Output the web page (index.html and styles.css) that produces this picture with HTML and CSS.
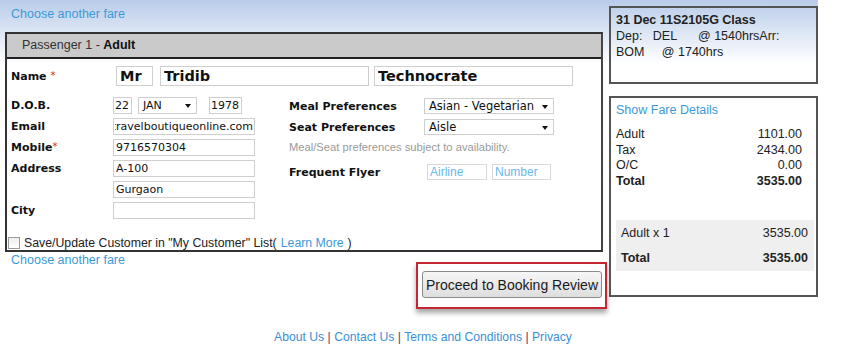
FILE: index.html
```html
<!DOCTYPE html>
<html lang="en">
<head>
  <meta charset="UTF-8">
  <title>Passenger Details</title>
  <link rel="stylesheet" href="styles.css">
</head>
<body>
  <div class="page">
    <div class="main">
      <div class="top-link"><a href="#">Choose another fare</a></div>

      <div class="pax">
        <div class="pax-head">Passenger 1 - <b>Adult</b></div>
        <div class="pax-body">
          <div class="name-row">
            <span class="lbl name-lbl">Name <span class="req">*</span></span>
            <input class="fld big title" value="Mr">
            <input class="fld big first" value="Tridib">
            <input class="fld big last" value="Technocrate">
          </div>

          <div class="cols">
            <div class="col-left">
              <span class="lbl">D.O.B.</span>
              <div class="dob">
                <input class="fld day" value="22">
                <span class="sel month">JAN</span>
                <input class="fld year" value="1978">
              </div>
              <span class="lbl">Email</span>
              <input class="fld email" value="info@travelboutiqueonline.com">
              <span class="lbl">Mobile<span class="req">*</span></span>
              <input class="fld" value="9716570304">
              <span class="lbl">Address</span>
              <input class="fld" value="A-100">
              <span class="lbl"></span>
              <input class="fld" value="Gurgaon">
              <span class="lbl">City</span>
              <input class="fld" value="">
            </div>

            <div class="col-right">
              <div class="pref meal">
                <span class="lbl">Meal Preferences</span>
                <span class="sel wide">Asian - Vegetarian</span>
              </div>
              <div class="pref seat">
                <span class="lbl">Seat Preferences</span>
                <span class="sel wide">Aisle</span>
              </div>
              <div class="note">Meal/Seat preferences subject to availability.</div>
              <div class="pref flyer">
                <span class="lbl">Frequent Flyer</span>
                <input class="ff airline" placeholder="Airline">
                <input class="ff number" placeholder="Number">
              </div>
            </div>
          </div>

          <label class="save">
            <span class="box"></span>
            Save/Update Customer in "My Customer" List( <a href="#">Learn More</a> )
          </label>
        </div>
      </div>

      <div class="after">
        <a href="#">Choose another fare</a>
        <div class="proceed">
          <button>Proceed to Booking Review</button>
        </div>
      </div>
    </div>

    <aside class="side">
      <div class="flight">
        <b>31 Dec 11S2105G Class</b><br>
        Dep:&nbsp;&nbsp; DEL&nbsp;&nbsp;&nbsp;&nbsp;&nbsp; @ 1540hrsArr:<br>
        BOM&nbsp;&nbsp;&nbsp;&nbsp; @ 1740hrs
      </div>
      <div class="fare">
        <a href="#">Show Fare Details</a>
        <div class="fare-rows">
          <span>Adult</span><span>1101.00</span>
          <span>Tax</span><span>2434.00</span>
          <span>O/C</span><span>0.00</span>
          <b>Total</b><b>3535.00</b>
        </div>
        <div class="summary">
          <span>Adult x 1</span><span>3535.00</span>
          <b>Total</b><b>3535.00</b>
        </div>
      </div>
    </aside>
  </div>

  <div class="footer">
    <a href="#">About Us</a> | <a href="#">Contact Us</a> | <a href="#">Terms and Conditions</a> | <a href="#">Privacy</a>
  </div>
</body>
</html>
```

FILE: styles.css
```css
body {
  margin: 0;
  font-family: Arial, "Liberation Sans", sans-serif;
  font-size: 12.5px;
  color: #222;
  background: #fff;
}
a {
  color: #3c9ad8;
  text-decoration: none;
}
.page {
  width: 818px;
  padding-top: 6px;
  display: flex;
  align-items: flex-start;
  background: linear-gradient(#b9cce9, #fff 64px) no-repeat;
  background-size: 100% 80px;
}
.main {
  width: 598px;
  margin-left: 5px;
}
.top-link {
  height: 26px;
  padding-left: 6px;
  line-height: 16px;
}

/* passenger panel */
.pax {
  border: 2px solid #333;
  border-right-color: #444;
}
.pax-head {
  height: 23px;
  line-height: 23px;
  padding-left: 15px;
  background: #cacaca;
  border-bottom: 2px solid #222;
  color: #333;
}
.pax-head b {
  color: #111;
}
.pax-body {
  padding: 7px 4px 0 4px;
}
.lbl {
  font-family: "DejaVu Sans", Verdana, sans-serif;
  font-size: 11px;
  font-weight: bold;
  color: #111;
}
.req {
  color: #e02020;
  font-weight: normal;
  font-size: 10px;
  vertical-align: top;
}
.fld {
  box-sizing: border-box;
  height: 17px;
  width: 142px;
  border: 1px solid #cfcfcf;
  padding: 0 2px;
  margin: 0;
  font-family: "DejaVu Sans", Verdana, sans-serif;
  font-size: 11px;
  color: #111;
  background: #fff;
}
.name-row {
  display: flex;
  align-items: center;
  height: 20px;
}
.name-lbl {
  width: 105px;
}
.fld.big {
  height: 20px;
  font-size: 14.5px;
  font-weight: bold;
  padding: 0 3px;
}
.fld.title { width: 37px; }
.fld.first { width: 209px; margin-left: 7px; }
.fld.last { width: 199px; margin-left: 5px; }

.cols {
  display: flex;
  margin-top: 11px;
}
.col-left {
  display: grid;
  grid-template-columns: 102px 142px;
  grid-auto-rows: 17px;
  row-gap: 4px;
  align-items: center;
}
.dob {
  display: flex;
  align-items: center;
}
.fld.day {
  width: 19px;
  padding: 0 1px;
}
.fld.year {
  width: 33px;
  margin-left: 12px;
  padding: 0 1px;
}
.fld.email {
  direction: rtl;
  padding: 0 1px;
}
.sel {
  position: relative;
  box-sizing: border-box;
  display: inline-block;
  height: 16px;
  line-height: 14px;
  border: 1px solid #cfcfcf;
  padding-left: 4px;
  font-family: "DejaVu Sans", Verdana, sans-serif;
  font-size: 11.5px;
  color: #111;
  background: #fff;
}
.sel::after {
  content: "";
  position: absolute;
  right: 5px;
  top: 6px;
  border-left: 3px solid transparent;
  border-right: 3px solid transparent;
  border-top: 4px solid #111;
}
.sel.month {
  width: 59px;
  margin-left: 6px;
  height: 17px;
  line-height: 15px;
  font-size: 11px;
}
.sel.wide {
  width: 130px;
}

.col-right {
  margin-left: 34px;
  margin-top: 1px;
}
.pref {
  display: flex;
  align-items: center;
  height: 16px;
}
.pref .lbl {
  width: 135px;
}
.pref.seat {
  margin-top: 5px;
}
.note {
  margin-top: 5px;
  height: 14px;
  line-height: 14px;
  font-size: 11.2px;
  color: #9a9a9a;
}
.pref.flyer {
  margin-top: 10px;
}
.pref.flyer .lbl {
  width: 138px;
}
.ff {
  box-sizing: border-box;
  height: 16px;
  width: 60px;
  border: 1px solid #d8d8d8;
  padding: 0 2px;
  margin: 0;
  font-family: Arial, "Liberation Sans", sans-serif;
  font-size: 12px;
}
.ff::placeholder {
  color: #6ab8ec;
}
.ff.number {
  width: 59px;
  margin-left: 5px;
}

.save {
  display: flex;
  align-items: center;
  margin: 17px 0 0 -3px;
  height: 14px;
  line-height: 14px;
  font-size: 12.3px;
  color: #222;
}
.save .box {
  box-sizing: border-box;
  width: 12px;
  height: 12px;
  border: 1px solid #9a9a9a;
  background: linear-gradient(#eee, #fff);
  margin-right: 4px;
}
.save a {
  margin: 0 4px;
}

.after {
  display: flex;
  justify-content: space-between;
  align-items: flex-start;
  padding-left: 6px;
  line-height: 16px;
}
.proceed {
  margin-top: 10px;
  margin-right: -4px;
  border: 2px solid #c4272f;
  padding: 7px 3px 9px 4px;
  box-shadow: 0 4px 5px rgba(0, 0, 0, 0.35);
}
.proceed button {
  display: block;
  width: 180px;
  height: 27px;
  padding: 0;
  border: 1px solid #8a8a8a;
  border-radius: 3px;
  background: linear-gradient(#f6f6f6, #dedede);
  font-family: Arial, "Liberation Sans", sans-serif;
  font-size: 14px;
  color: #1a1a1a;
}

/* right column */
.side {
  width: 209px;
  margin-left: 6px;
}
.flight {
  box-sizing: border-box;
  height: 78px;
  border: 2px solid #555;
  padding: 4px 5px;
  line-height: 16px;
  color: #222;
}
.fare {
  box-sizing: border-box;
  height: 201px;
  margin-top: 12px;
  border: 2px solid #555;
  padding: 4px 2px 0 5px;
  line-height: 16px;
}
.fare-rows {
  display: grid;
  grid-template-columns: 1fr auto;
  line-height: 15.5px;
  margin: 9px 12px 0 0;
  color: #222;
}
.fare-rows span:nth-child(even),
.fare-rows b:last-child {
  text-align: right;
}
.summary {
  display: grid;
  grid-template-columns: 1fr auto;
  row-gap: 9px;
  margin-top: 31px;
  padding: 5px 6px 5px 5px;
  background: #efefef;
  color: #222;
}
.summary > :nth-child(even) {
  text-align: right;
}

.footer {
  margin-top: 21px;
  text-align: center;
  font-size: 12.2px;
  line-height: 15px;
  color: #5b3a66;
  padding-right: 4px;
}
.footer a {
  color: #3a8fd4;
}
```
